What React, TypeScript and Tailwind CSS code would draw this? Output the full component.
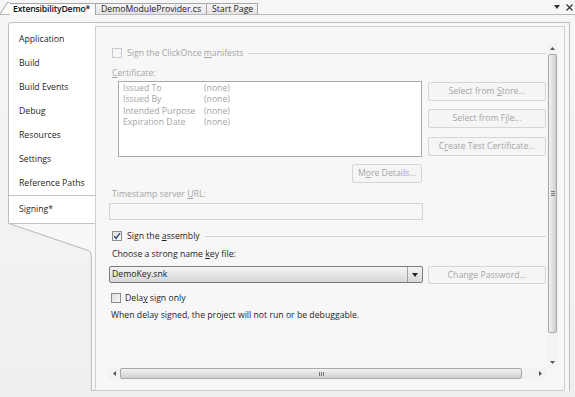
import React from "react";

const DIS = "text-[#a5a5a5]";
const INK = "text-[#1e1e1e]";

function U({ children }: { children: React.ReactNode }) {
  return <span className="underline underline-offset-[1px] decoration-[0.5px]">{children}</span>;
}

function CheckBox({ checked, disabled }: { checked?: boolean; disabled?: boolean }) {
  if (disabled) {
    return <div className="w-[10px] h-[10px] flex-none border border-[#cacaca] bg-[#f7f7f7]" />;
  }
  return (
    <div className="w-[10px] h-[10px] flex-none border border-[#8c8c8c] bg-[linear-gradient(135deg,#dcdcdc,#f8f8f8)] flex items-center justify-center">
      {checked && (
        <svg width="8" height="8" viewBox="0 0 8 8">
          <path d="M1.2 4.2 L3.1 6.3 L6.9 1.2" fill="none" stroke="#2a4a86" strokeWidth="1.4" />
        </svg>
      )}
    </div>
  );
}

function DisButton({ children, className }: { children: React.ReactNode; className: string }) {
  return (
    <div
      className={`flex-none flex items-center justify-center border border-[#d6d6d6] rounded-[2px] bg-[#f5f5f5] ${DIS} ${className}`}
    >
      {children}
    </div>
  );
}

function Separator() {
  return <div className="flex-1 h-px bg-[#d2d2d2] ml-[5px] mr-[1px]" />;
}

function NavItem({ label }: { label: string }) {
  return <div className={`h-[24px] flex items-center pl-[10px] ${INK}`}>{label}</div>;
}

const NAV = ["Application", "Build", "Build Events", "Debug", "Resources", "Settings", "Reference Paths"];

const CERT = [
  ["Issued To", "(none)"],
  ["Issued By", "(none)"],
  ["Intended Purpose", "(none)"],
  ["Expiration Date", "(none)"],
];

function VScroll() {
  return (
    <div className="w-[11px] flex-none flex flex-col bg-[#f3f3f3]">
      <div className="h-[12px] flex items-center justify-center">
        <svg width="5" height="3" viewBox="0 0 5 3">
          <path d="M0 3 L2.5 0 L5 3 Z" fill="#555" />
        </svg>
      </div>
      <div className="h-[279px] mx-[1px] border border-[#a9a9a9] rounded-[2px] bg-[linear-gradient(to_right,#f2f2f2,#dedede_60%,#cfcfcf)] flex items-center justify-center">
        <div className="flex flex-col gap-[1px]">
          <div className="w-[4px] h-px bg-[#777]" />
          <div className="w-[4px] h-px bg-[#777]" />
          <div className="w-[4px] h-px bg-[#777]" />
        </div>
      </div>
      <div className="flex-1" />
      <div className="h-[12px] flex items-center justify-center">
        <svg width="5" height="3" viewBox="0 0 5 3">
          <path d="M0 0 L2.5 3 L5 0 Z" fill="#555" />
        </svg>
      </div>
    </div>
  );
}

function HScroll() {
  return (
    <div className="h-[11px] flex-none flex">
      <div className="flex-1 flex bg-[#f3f3f3]">
        <div className="w-[12px] flex items-center justify-center">
          <svg width="3" height="5" viewBox="0 0 3 5">
            <path d="M3 0 L0 2.5 L3 5 Z" fill="#555" />
          </svg>
        </div>
        <div className="w-[402px] border border-[#a9a9a9] rounded-[2px] bg-[linear-gradient(to_bottom,#f2f2f2,#dedede_60%,#cfcfcf)] flex items-center justify-center">
          <div className="flex gap-[1px]">
            <div className="w-px h-[4px] bg-[#777]" />
            <div className="w-px h-[4px] bg-[#777]" />
            <div className="w-px h-[4px] bg-[#777]" />
          </div>
        </div>
        <div className="flex-1" />
        <div className="w-[14px] flex items-center justify-center">
          <svg width="3" height="5" viewBox="0 0 3 5">
            <path d="M0 0 L3 2.5 L0 5 Z" fill="#555" />
          </svg>
        </div>
      </div>
      <div className="w-[11px]" />
    </div>
  );
}

function Signing() {
  return (
    <div className="flex-1 flex flex-col">
      {/* Sign the ClickOnce manifests */}
      <div className="mt-[5px] h-[12px] flex items-center pl-[4px]">
        <CheckBox disabled />
        <span className={`ml-[5px] ${DIS}`}>
          Sign the ClickOnce <U>m</U>anifests
        </span>
        <Separator />
      </div>
      <div className={`mt-[8px] h-[12px] flex items-center pl-[4px] ${DIS}`}>
        <span>
          <U>C</U>ertificate:
        </span>
      </div>
      <div className="mt-[2px] flex">
        <div className="ml-[10px] w-[304px] h-[76px] border border-[#a8a8a8] bg-white pl-[4px] pt-[1px]">
          {CERT.map(([k, v]) => (
            <div key={k} className={`flex h-[11.4px] leading-[11.4px] ${DIS}`}>
              <div className="w-[81px]">{k}</div>
              <div>{v}</div>
            </div>
          ))}
        </div>
        <div className="ml-[6px] flex flex-col">
          <DisButton className="mt-[1px] w-[118px] h-[19px]">
            <span>
              Select from <U>S</U>tore...
            </span>
          </DisButton>
          <DisButton className="mt-[8px] w-[118px] h-[19px]">
            <span>
              Select from F<U>i</U>le...
            </span>
          </DisButton>
          <DisButton className="mt-[9px] w-[118px] h-[19px]">
            <span>
              C<U>r</U>eate Test Certificate...
            </span>
          </DisButton>
        </div>
      </div>
      <DisButton className="mt-[7px] ml-[244px] w-[70px] h-[19px]">
        <span>
          M<U>o</U>re Details...
        </span>
      </DisButton>
      <div className={`mt-[5px] h-[12px] flex items-center pl-[4px] ${DIS}`}>
        <span>
          Timestamp server <U>U</U>RL:
        </span>
      </div>
      <div className="mt-[3px] ml-[1px] w-[314px] h-[17px] border border-[#d3d3d3] bg-[#f7f7f7]" />
      {/* Sign the assembly */}
      <div className="mt-[10px] h-[12px] flex items-center pl-[4px]">
        <CheckBox checked />
        <span className={`ml-[5px] ${INK}`}>
          Sign the <U>a</U>ssembly
        </span>
        <Separator />
      </div>
      <div className={`mt-[6px] h-[12px] flex items-center pl-[4px] ${INK}`}>
        <span>
          Choose a strong name <U>k</U>ey file:
        </span>
      </div>
      <div className="mt-[6px] flex items-start">
        <div className="ml-[1px] w-[314px] h-[17px] flex border border-[#7d7d7d] rounded-[2px] bg-[linear-gradient(to_bottom,#f4f4f4,#e6e6e6_50%,#d6d6d6)]">
          <div className={`flex-1 flex items-center pl-[2px] ${INK}`}>DemoKey.snk</div>
          <div className="w-[15px] border-l border-[#a0a0a0] flex items-center justify-center">
            <svg width="6" height="4" viewBox="0 0 6 4">
              <path d="M0 0 L3 4 L6 0 Z" fill="#222" />
            </svg>
          </div>
        </div>
        <DisButton className="ml-[5px] w-[118px] h-[18px]">
          <span>Change Password...</span>
        </DisButton>
      </div>
      <div className="mt-[8px] h-[12px] flex items-center pl-[3px]">
        <CheckBox />
        <span className={`ml-[4px] ${INK}`}>
          Dela<U>y</U> sign only
        </span>
      </div>
      <div className={`mt-[5px] h-[12px] flex items-center pl-[3px] ${INK}`}>
        When delay signed, the project will not run or be debuggable.
      </div>
    </div>
  );
}

export default function App() {
  return (
    <div className="w-[575px] h-[397px] overflow-hidden flex flex-col bg-[linear-gradient(to_bottom,#f6f6f6,#f0eef1)] font-['Open_Sans',sans-serif] text-[8.7px] leading-none">
      {/* document tabs */}
      <div className="h-[15px] flex-none flex items-end border-b border-[#b9b9b9] bg-[#f6f6f6]">
        <div className="flex items-end">
          <svg width="10" height="12" viewBox="0 0 10 12" className="block">
            <path d="M0 12 L7 1 Q8 0 10 0 L10 12 Z" fill="#fbfbfb" />
            <path d="M0 12 L7 1 Q8 0 10 0" fill="none" stroke="#a6a6a6" strokeWidth="1" />
          </svg>
          <div className="h-[12px] w-[86px] flex items-center pl-[3px] bg-[#fbfbfb] border-t border-r border-[#a6a6a6] font-semibold tracking-[-0.2px] whitespace-nowrap overflow-hidden text-[#111] -mb-px">
            ExtensibilityDemo*
          </div>
        </div>
        <div className="h-[11px] w-[111px] flex items-center pl-[5px] border-t border-r border-[#a6a6a6] bg-[linear-gradient(to_bottom,#f6f6f6,#e3e3e3)] text-[#222]">
          DemoModuleProvider.cs
        </div>
        <div className="h-[11px] w-[51px] flex items-center pl-[5px] border-t border-r border-[#a6a6a6] bg-[linear-gradient(to_bottom,#f6f6f6,#e3e3e3)] text-[#222]">
          Start Page
        </div>
        <div className="flex-1" />
        <div className="h-[14px] flex items-center gap-[6px] pr-[2px]">
          <svg width="6" height="4" viewBox="0 0 6 4">
            <path d="M0 0 L3 4 L6 0 Z" fill="#333" />
          </svg>
          <svg width="7" height="7" viewBox="0 0 7 7">
            <path d="M0.5 0.5 L6.5 6.5 M6.5 0.5 L0.5 6.5" stroke="#333" strokeWidth="1.2" />
          </svg>
        </div>
      </div>

      {/* designer body */}
      <div className="mt-[7px] ml-[8px] mr-[5px] h-[369px] flex">
        {/* left navigation */}
        <div className="w-[87px] flex-none flex flex-col">
          <div className="bg-white border-l border-t border-[#bdbdbd] rounded-tl-[4px] pt-[4px]">
            {NAV.map((n) => (
              <NavItem key={n} label={n} />
            ))}
            <div className={`h-[28px] flex items-center pl-[10px] border-t border-[#c4c4c4] ${INK}`}>Signing*</div>
          </div>
          <svg width="87" height="169" viewBox="0 0 87 169" className="block">
            <path d="M0 0 L87 0 L87 169 L83 169 L83 31 Q83 28 80 27.5 Z" fill="#f8f8f8" />
            <path d="M0.5 0.5 L80 27.5 Q83.5 28.5 83.5 32 L83.5 168.5 L87 168.5" fill="none" stroke="#b5b5b5" strokeWidth="1" />
            <path d="M0 0.5 L87 0.5" stroke="#c4c4c4" strokeWidth="1" />
          </svg>
        </div>

        {/* property page */}
        <div className="flex-1 flex flex-col border-t border-r border-[#bdbdbd] bg-[#f8f8f8] pt-[3px] pr-[4px]">
          <div className="flex-1 flex flex-col border border-[#cfcfcf] bg-[#f7f7f7] pt-[15px] pl-[12px] pr-[6px] pb-[11px]">
            <div className="flex-1 flex">
              <Signing />
              <VScroll />
            </div>
            <HScroll />
          </div>
        </div>
      </div>
    </div>
  );
}
